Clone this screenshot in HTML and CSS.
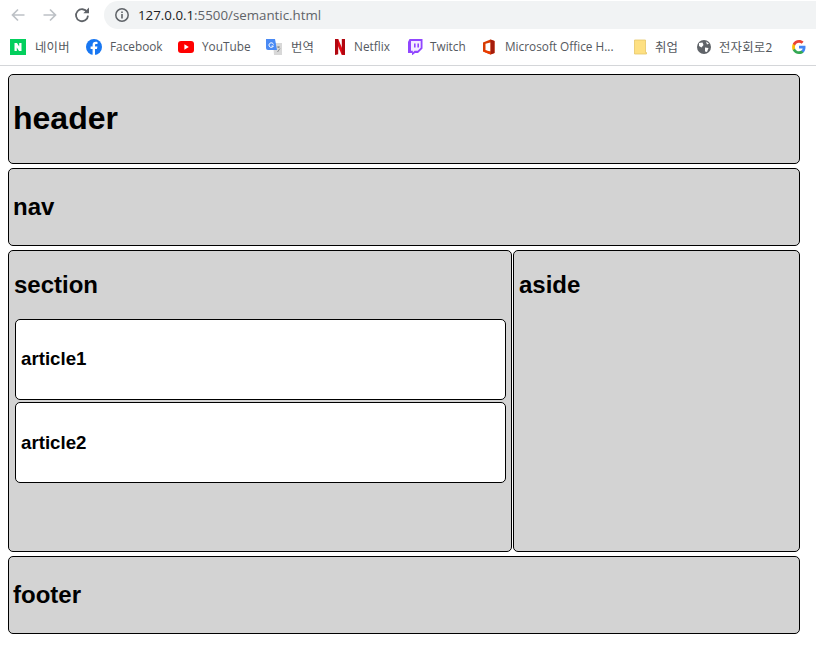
FILE: index.html
```html
<!DOCTYPE html>
<html lang="ko">
<head>
<meta charset="utf-8">
<title>semantic</title>
<link rel="stylesheet" href="styles.css">
</head>
<body>
<div class="chrome">
  <div class="toolbar">
    <svg class="nav-icon" viewBox="0 0 16 16"><path d="M14.5 8H2.5M8 2.5L2.5 8L8 13.5" fill="none" stroke="#bdc1c6" stroke-width="1.7"/></svg>
    <svg class="nav-icon" viewBox="0 0 16 16"><path d="M1.5 8H13.5M8 2.5L13.5 8L8 13.5" fill="none" stroke="#bdc1c6" stroke-width="1.7"/></svg>
    <svg class="nav-icon" viewBox="0 0 16 16"><path d="M13.2 5.2A6 6 0 1 0 14 8.6" fill="none" stroke="#5f6368" stroke-width="1.8"/><path d="M9.3 6.2H15V0.5Z" fill="#5f6368"/></svg>
    <div class="omnibox">
      <svg class="info" viewBox="0 0 16 16"><circle cx="8" cy="8" r="6.2" fill="none" stroke="#5f6368" stroke-width="1.5"/><path d="M7.2 7H8.8V11.6H7.2ZM7.2 4.4H8.8V6H7.2Z" fill="#5f6368"/></svg>
      <span class="url"><span class="host">127.0.0.1</span>:5500/semantic.html</span>
    </div>
  </div>
  <div class="bookmarks">
    <div class="bm b-naver"><svg viewBox="0 0 16 16"><rect width="16" height="16" fill="#03cf5d"/><path d="M4.5 4H7L9.2 7.5V4H11.5V12H9L6.8 8.5V12H4.5Z" fill="#fff"/></svg><span class="ko">네이버</span></div>
    <div class="bm b-fb"><svg viewBox="0 0 16 16"><circle cx="8" cy="8" r="8" fill="#1877f2"/><path d="M9 16V10H11L11.4 7.6H9V6.2C9 5.4 9.4 5 10.1 5H11.5V3C11 2.9 10.3 2.8 9.7 2.8C7.7 2.8 6.6 4 6.6 5.9V7.6H4.6V10H6.6V16Z" fill="#fff"/></svg><span>Facebook</span></div>
    <div class="bm b-yt"><svg viewBox="0 0 16 16"><rect y="2" width="16" height="12" rx="3" fill="#f00"/><path d="M6.4 5.3L10.8 8L6.4 10.7Z" fill="#fff"/></svg><span>YouTube</span></div>
    <div class="bm b-tr"><svg viewBox="0 0 16 16"><path d="M7 4H16V16H8Z" fill="#d8d8d8"/><path d="M0 0H9L11 11H2Q0 11 0 9Z" fill="#4a8af4"/><path d="M7.5 5.5A2.3 2.3 0 1 0 7.4 7H5.5" fill="none" stroke="#fff" stroke-width="1"/><path d="M11 8H14M12.5 7.5V9M11.5 13L14 9.5" stroke="#888" stroke-width=".9" fill="none"/></svg><span class="ko">번역</span></div>
    <div class="bm b-nf"><svg viewBox="0 0 16 16"><path d="M3 0H6.2L13 16H9.8Z" fill="#e50914"/><path d="M3 0H6.2V15.2L3 16ZM9.8 0H13V16L9.8 15.2Z" fill="#b1060f"/></svg><span>Netflix</span></div>
    <div class="bm b-tw"><svg viewBox="0 0 16 16"><path d="M2.5 0H15.5V9.5L11 14H8L5 16.5V14H1V3Z" fill="#9146ff"/><path d="M4 2H13.7V8.8L10.7 11.8H7.5L5.8 13.4V11.8H4Z" fill="#f4edff"/><path d="M7 4.4H8.6V8.4H7ZM10.4 4.4H12V8.4H10.4Z" fill="#9146ff"/></svg><span>Twitch</span></div>
    <div class="bm b-ms"><svg viewBox="0 0 16 16"><path d="M2 3.5L9.5 0.5L13.5 2V14L9.5 15.5L2 12.5Z" fill="#d83b01"/><path d="M9.5 0.5L13.5 2V14L9.5 15.5Z" fill="#a51c0c"/><path d="M4.5 4.8L9.3 3.6V12.4L4.5 11.2Z" fill="#fff"/><path d="M2 12.5L9.5 15.5V13L4.5 11.2Z" fill="#eb3c00"/></svg><span>Microsoft Office H...</span></div>
    <div class="bm b-fo"><svg viewBox="0 0 16 16"><path d="M1.5 1H12.5V13.5H13.5V15H1.5Z" fill="#fee082" stroke="#e6c768" stroke-width=".8"/></svg><span class="ko">취업</span></div>
    <div class="bm b-gl"><svg viewBox="0 0 16 16"><circle cx="8" cy="8" r="7" fill="#5f6368"/><path d="M3 4L6.5 3.5L7.5 6L5.5 8.5L3 7ZM9 8.5L12.5 9L11 13L9 12.5ZM10 2.5L13 4.5L11 5.5Z" fill="#fff"/></svg><span class="ko">전자회로2</span></div>
    <div class="bm b-g"><svg viewBox="0 0 16 16"><path d="M14.5 8.2C14.5 7.7 14.5 7.2 14.4 6.7H8V9.5H11.7C11.5 10.4 11 11.1 10.3 11.6V13.4H12.5C13.8 12.2 14.5 10.4 14.5 8.2Z" fill="#4285f4"/><path d="M8 15C9.9 15 11.4 14.4 12.5 13.4L10.3 11.6C9.7 12 8.9 12.3 8 12.3C6.2 12.3 4.6 11.1 4.1 9.4H1.8V11.2C2.9 13.5 5.3 15 8 15Z" fill="#34a853"/><path d="M4.1 9.4C3.8 8.5 3.8 7.5 4.1 6.6V4.8H1.8C.9 6.7.9 9.3 1.8 11.2Z" fill="#fbbc05"/><path d="M8 3.7C9 3.7 9.9 4.1 10.6 4.7L12.6 2.7C11.4 1.6 9.8 1 8 1C5.3 1 2.9 2.5 1.8 4.8L4.1 6.6C4.6 4.9 6.2 3.7 8 3.7Z" fill="#ea4335"/></svg><span>Google</span></div>
  </div>
</div>
<div class="page">
  <header class="box header"><h1>header</h1></header>
  <nav class="box nav"><h2>nav</h2></nav>
  <div class="columns">
    <section class="box section">
      <h2>section</h2>
      <article class="box article"><h3>article1</h3></article>
      <article class="box article"><h3>article2</h3></article>
    </section>
    <aside class="box aside"><h2>aside</h2></aside>
  </div>
  <footer class="box footer"><h2>footer</h2></footer>
</div>
</body>
</html>
```

FILE: styles.css
```css
* { box-sizing: border-box; }
html, body { margin: 0; padding: 0; background: #fff; }
body { width: 816px; height: 662px; overflow: hidden; font-family: "Liberation Sans", Arial, sans-serif; color: #000; }

.chrome { height: 66px; border-bottom: 1px solid #d4d6d9; background: #fff; overflow: hidden; }
.toolbar { height: 30px; display: flex; align-items: center; padding-left: 10px; }
.nav-icon { width: 16px; height: 16px; flex: none; margin-right: 16px; }
.omnibox { flex: 1; height: 28px; margin-left: -2px; background: #f1f3f4; border-radius: 14px 0 0 14px; display: flex; align-items: center; padding-left: 10px; gap: 8px; }
.info { width: 16px; height: 16px; flex: none; }
.url { font-family: "Open Sans", sans-serif; font-size: 13.3px; color: #5f6368; white-space: nowrap; }
.host { color: #202124; }

.bookmarks { height: 33px; display: flex; align-items: center; padding-left: 10px; white-space: nowrap; }
.bm { display: flex; align-items: center; gap: 9px; flex: none; font-family: "Open Sans", "Noto Sans CJK KR", sans-serif; font-size: 11.8px; color: #55595e; }
.bm svg { width: 16px; height: 16px; flex: none; }
.bm span { padding-bottom: 2px; }
.bm .ko { font-family: "Noto Sans CJK KR", sans-serif; font-size: 12.4px; letter-spacing: 0.2px; padding-bottom: 0; }
.b-naver { width: 76px; }
.b-fb { width: 92px; gap: 8px; }
.b-yt { width: 88px; gap: 8px; }
.b-tr { width: 66px; }
.b-nf { width: 75px; gap: 6px; }
.b-tw { width: 74px; gap: 7px; }
.b-ms { width: 152px; gap: 8px; }
.b-fo { width: 63px; gap: 6px; }
.b-gl { width: 95px; gap: 7px; }

.page { padding: 8px 16px 0 8px; display: flex; flex-direction: column; gap: 4px; }
.box { border: 1px solid #000; border-radius: 5px; background: #d3d3d3; padding: 0 4px; }
.box h1, .box h2, .box h3 { margin: 0; font-weight: bold; }
.header { height: 90px; display: flex; align-items: center; padding-bottom: 2px; }
.header h1 { font-size: 32px; }
.nav, .footer { height: 78px; display: flex; align-items: center; }
.nav h2, .footer h2 { font-size: 24px; }
.columns { display: flex; gap: 1px; height: 302px; }
.section { width: 504px; padding-top: 20px; }
.aside { flex: 1; padding-top: 20px; }
.section h2, .aside h2 { font-size: 24px; line-height: 28px; margin-bottom: 20px; padding-left: 1px; }
.article { background: #fff; height: 81px; margin: 0 1px 2px 2px; display: flex; align-items: center; }
.article:first-of-type { padding-bottom: 2px; }
.article h3 { font-size: 18.72px; padding-left: 1px; }
```
